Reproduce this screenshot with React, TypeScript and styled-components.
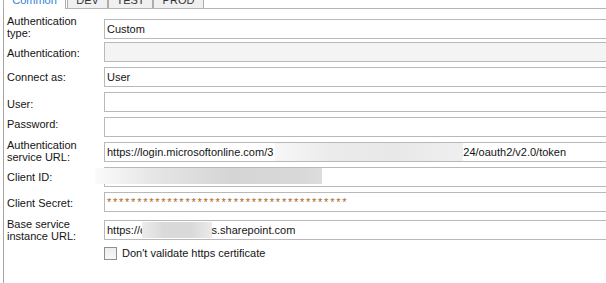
import React from 'react';
import styled, { createGlobalStyle } from 'styled-components';

const GlobalStyle = createGlobalStyle`
  html, body {
    margin: 0;
    padding: 0;
    background: #ffffff;
    overflow: hidden;
  }
  body {
    font-family: 'Liberation Sans', Arial, sans-serif;
    font-size: 11px;
    color: #141414;
  }
`;

const Window = styled.div`
  width: 606px;
  height: 283px;
  padding-left: 3px;
  box-sizing: border-box;
  overflow: hidden;
`;

const TabStrip = styled.div`
  display: flex;
  align-items: flex-end;
  height: 20px;
  margin-top: -12px;
  position: relative;
  z-index: 1;
`;

const Tab = styled.div<{ $active?: boolean; $width: number }>`
  box-sizing: border-box;
  width: ${(p) => p.$width}px;
  height: ${(p) => (p.$active ? 21 : 20)}px;
  margin-bottom: ${(p) => (p.$active ? -1 : 0)}px;
  margin-right: ${(p) => (p.$active ? 2 : 1)}px;
  padding-top: 5px;
  line-height: 13px;
  text-align: center;
  border: 1px solid #adadad;
  border-bottom: none;
  background: ${(p) => (p.$active ? '#ffffff' : '#f0f0f0')};
  color: ${(p) => (p.$active ? '#2f7fd8' : '#333333')};

  & + & {
    margin-left: ${(p) => (p.$active ? 0 : -1)}px;
  }
`;

const Panel = styled.div`
  height: 300px;
  border-left: 1px solid #a5a5a5;
  border-top: 1px solid #b4b4b4;
  padding-left: 3px;
`;

const Form = styled.div`
  display: flex;
  flex-direction: column;
`;

const Row = styled.div<{ $gap: number }>`
  position: relative;
  display: grid;
  grid-template-columns: 97px 510px;
  grid-template-rows: 20px;
  margin-top: ${(p) => p.$gap}px;
`;

const Label = styled.div<{ $dy?: number }>`
  align-self: center;
  line-height: 12px;
  white-space: pre-line;
  transform: translateY(${(p) => p.$dy ?? 0}px);
`;

const Field = styled.div<{ $disabled?: boolean }>`
  box-sizing: border-box;
  height: 20px;
  border: 1px solid #b9b9b9;
  padding-left: 2px;
  line-height: 18px;
  white-space: nowrap;
  overflow: hidden;
  background: ${(p) => (p.$disabled ? '#f4f4f4' : '#ffffff')};
`;

const Secret = styled.span`
  letter-spacing: 1.75px;
  color: #a8682c;
`;

const Smudge = styled.span<{ $width: number; $shift?: number; $tone: 'light' | 'dark' }>`
  display: inline-block;
  width: ${(p) => p.$width}px;
  height: ${(p) => (p.$tone === 'light' ? 18 : 16)}px;
  margin-left: ${(p) => p.$shift ?? 0}px;
  vertical-align: ${(p) => (p.$tone === 'light' ? 'top' : '-4px')};
  background: ${(p) =>
    p.$tone === 'light'
      ? 'linear-gradient(to right, #f7f7f7 0%, #ebebeb 30%, #e8e8e8 65%, #efefef 100%)'
      : 'linear-gradient(to right, #ececec 0%, #dadada 30%, #d9d9d9 70%, #ebebeb 100%)'};
`;

const IdSmudge = styled.div`
  position: absolute;
  left: 88px;
  top: 1px;
  width: 227px;
  height: 16px;
  background: linear-gradient(to right, #fbfbfb 0%, #e6e6e6 25%, #d5d5d5 60%, #d8d8d8 90%, #dddddd 100%);
`;

const CheckRow = styled.label`
  display: flex;
  align-items: center;
  gap: 5px;
  margin-top: 7px;
  margin-left: 97px;
  line-height: 13px;
`;

const Box = styled.span`
  box-sizing: border-box;
  width: 13px;
  height: 13px;
  border: 1px solid #8f8f8f;
  background: linear-gradient(#eeeeee, #f7f7f7);
`;

export default function App() {
  return (
    <>
      <GlobalStyle />
      <Window>
        <TabStrip>
          <Tab $active $width={63}>Common</Tab>
          <Tab $width={41}>DEV</Tab>
          <Tab $width={45}>TEST</Tab>
          <Tab $width={51}>PROD</Tab>
        </TabStrip>
        <Panel>
          <Form>
            <Row $gap={10}>
              <Label $dy={-2}>{'Authentication\ntype:'}</Label>
              <Field>Custom</Field>
            </Row>
            <Row $gap={3}>
              <Label $dy={1}>Authentication:</Label>
              <Field $disabled />
            </Row>
            <Row $gap={5}>
              <Label>Connect as:</Label>
              <Field>User</Field>
            </Row>
            <Row $gap={5}>
              <Label $dy={2}>User:</Label>
              <Field />
            </Row>
            <Row $gap={5}>
              <Label $dy={-3}>Password:</Label>
              <Field />
            </Row>
            <Row $gap={5}>
              <Label $dy={-1}>{'Authentication\nservice URL:'}</Label>
              <Field>
                https://login.microsoftonline.com/3
                <Smudge $tone="light" $width={188} $shift={2} />
                24/oauth2/v2.0/token
              </Field>
            </Row>
            <Row $gap={5}>
              <Label>Client ID:</Label>
              <Field />
              <IdSmudge />
            </Row>
            <Row $gap={5}>
              <Label $dy={1}>Client Secret:</Label>
              <Field>
                <Secret>****************************************</Secret>
              </Field>
            </Row>
            <Row $gap={8}>
              <Label>{'Base service\ninstance URL:'}</Label>
              <Field>
                https://c
                <Smudge $tone="dark" $width={70} $shift={-4} />
                s.sharepoint.com
              </Field>
            </Row>
            <CheckRow>
              <Box />
              Don't validate https certificate
            </CheckRow>
          </Form>
        </Panel>
      </Window>
    </>
  );
}
